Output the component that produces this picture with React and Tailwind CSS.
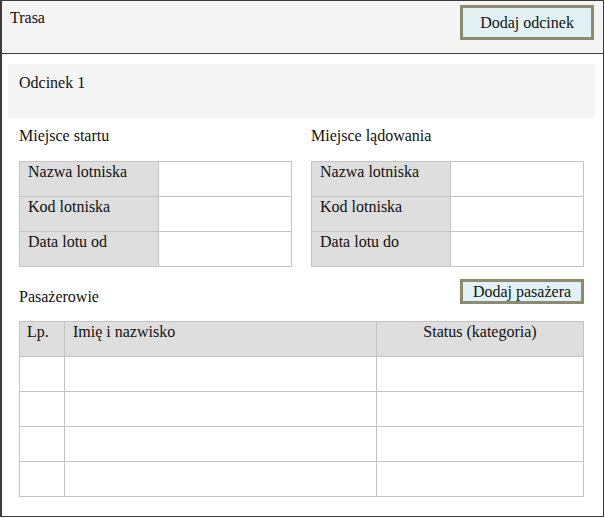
const airportRows = (last) => ['Nazwa lotniska', 'Kod lotniska', last];

const AirportTable = ({ title, last }) => (
  <div className="w-[273px]">
    <p className="leading-[18px]">{title}</p>
    <div className="mt-[16px] border border-[#c4c4c4]">
      {airportRows(last).map((label, i) => (
        <div key={label} className={`flex ${i > 0 ? 'h-[35px] border-t border-[#c4c4c4]' : 'h-[34px]'}`}>
          <div className="w-[139px] bg-[#dedede] border-r border-[#c4c4c4] pl-[8px] pt-[1px] leading-[18px]">{label}</div>
          <div className="flex-1 bg-white"></div>
        </div>
      ))}
    </div>
  </div>
);

const Button = ({ children, className }) => (
  <button className={`border-[3px] border-[#8c8c6c] bg-[#e2f1f5] text-[#111] leading-[18px] flex items-center justify-center ${className}`}>
    {children}
  </button>
);

export default function App() {
  return (
    <div className="w-[604px] h-[517px] border border-l-2 border-[#3c3c3c] bg-white text-[16px] text-[#111] font-['Liberation_Serif',serif]">
      {/* Route header */}
      <header className="h-[53px] bg-[#f4f4f4] border-b border-[#3c3c3c] flex justify-between items-start">
        <p className="pl-[8px] pt-[8px] leading-[18px]">Trasa</p>
        <Button className="mt-[4px] mr-[9px] w-[134px] h-[35px]">Dodaj odcinek</Button>
      </header>

      {/* Segment */}
      <div className="ml-[6px] mr-[8px] mt-[10px] h-[54px] bg-[#f5f5f5] pl-[11px] pt-[10px]">
        <p className="leading-[18px]">Odcinek 1</p>
      </div>

      <div className="pl-[17px] pr-[19px] mt-[9px]">
        <div className="flex justify-between">
          <AirportTable title="Miejsce startu" last="Data lotu od" />
          <AirportTable title="Miejsce lądowania" last="Data lotu do" />
        </div>

        <div className="mt-[12px] flex justify-between items-start">
          <p className="pt-[9px] leading-[18px]">Pasażerowie</p>
          <Button className="w-[124px] h-[25px]">Dodaj pasażera</Button>
        </div>

        {/* Passengers */}
        <div className="mt-[15px] border border-[#c4c4c4]">
          <div className="flex h-[34px] bg-[#dedede]">
            <div className="w-[45px] border-r border-[#c4c4c4] pl-[7px] pt-[1px] leading-[18px]">Lp.</div>
            <div className="w-[312px] border-r border-[#c4c4c4] pl-[8px] pt-[1px] leading-[18px]">Imię i nazwisko</div>
            <div className="flex-1 text-center pt-[1px] leading-[18px]">Status (kategoria)</div>
          </div>
          {[1, 2, 3, 4].map((n) => (
            <div key={n} className="flex h-[35px] border-t border-[#c4c4c4] bg-white">
              <div className="w-[45px] border-r border-[#c4c4c4]"></div>
              <div className="w-[312px] border-r border-[#c4c4c4]"></div>
              <div className="flex-1"></div>
            </div>
          ))}
        </div>
      </div>
    </div>
  );
}
